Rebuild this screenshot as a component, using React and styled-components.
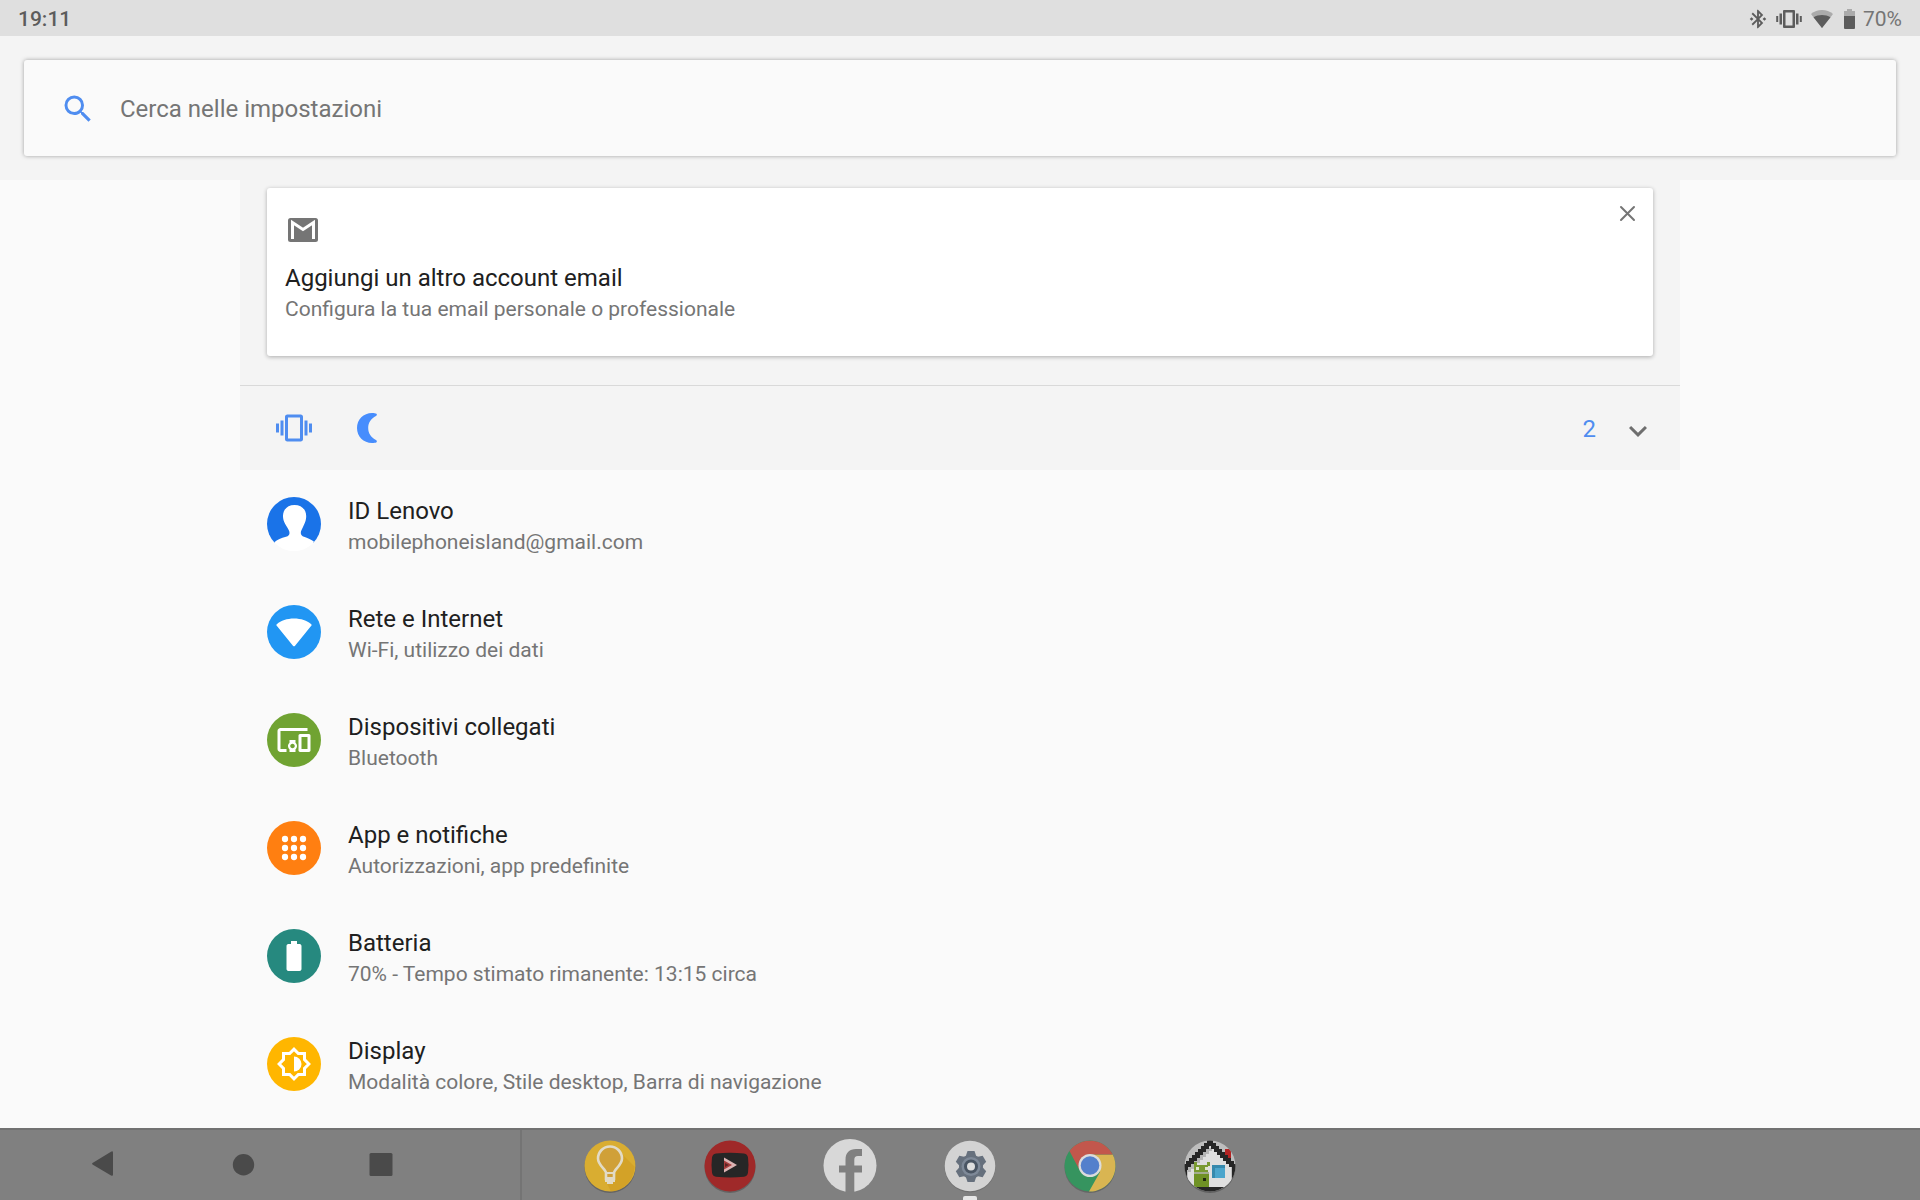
import React from 'react';
import styled, { createGlobalStyle } from 'styled-components';
import {
  MdSearch,
  MdVibration,
  MdDevicesOther,
  MdBatteryFull,
  MdExpandMore,
  MdBluetoothConnected,
} from 'react-icons/md';

const theme = {
  page: '#fafafa',
  band: '#f4f4f4',
  statusBar: '#dfdfdf',
  blue: '#4f8df0',
  title: '#202020',
  grey: '#757575',
  nav: '#808080',
  navIcon: '#4a4a4a',
};

const GlobalStyle = createGlobalStyle`
  * {
    box-sizing: border-box;
  }
  body {
    margin: 0;
    background: ${theme.page};
    font-family: Roboto, "Liberation Sans", sans-serif;
  }
`

const Page = styled.div`
  display: flex;
  flex-direction: column;
  min-height: 100vh;
`

const StatusBar = styled.header`
  display: flex;
  align-items: center;
  justify-content: space-between;
  height: 36px;
  padding: 1px 18px 0;
  background: ${theme.statusBar};
  font-size: 21px;
  line-height: 24px;
  color: #5c5c5c;
`

const Clock = styled.time`
  font-weight: 500;
`

const StatusIcons = styled.div`
  display: flex;
  align-items: center;
  color: #757575;

  svg {
    display: block;
    color: #5c5c5c;
  }
`

const SearchBand = styled.div`
  padding: 24px;
  background: ${theme.band};
`

const SearchCard = styled.label`
  display: flex;
  align-items: center;
  gap: 24px;
  height: 96px;
  padding: 2px 36px 0;
  background: ${theme.page};
  border-radius: 3px;
  box-shadow: 0 0 4px rgba(0, 0, 0, 0.35);
  color: ${theme.blue};
`

const SearchInput = styled.input`
  flex: 1;
  border: none;
  outline: none;
  padding: 0;
  background: transparent;
  font-family: inherit;
  font-size: 24px;
  line-height: 32px;
  color: ${theme.title};
  &::placeholder {
    color: ${theme.grey};
    opacity: 1;
  }
`

const Content = styled.main`
  flex: 1;
  width: 75%;
  margin: 0 auto;
`

const Suggestions = styled.section`
  padding: 8px 27px 29px;
  background: ${theme.band};
`

const SuggestionCard = styled.article`
  padding: 14px 13px 32px 18px;
  background: white;
  border-radius: 3px;
  box-shadow: 0 1px 4px rgba(0, 0, 0, 0.3);
`

const CardHeader = styled.div`
  display: flex;
  align-items: flex-start;
  justify-content: space-between;
  margin-bottom: 14px;
`

const CardIcon = styled.svg`
  display: block;
  margin-top: 10px;
`

const IconButton = styled.button`
  display: block;
  border: none;
  padding: 0;
  background: transparent;
  cursor: pointer;

  svg {
    display: block;
  }
`

const Title = styled.h2`
  margin: 0;
  font-size: 24px;
  font-weight: 400;
  line-height: 32px;
  color: ${theme.title};
`

const Summary = styled.p`
  margin: 0;
  font-size: 21px;
  line-height: 30px;
  color: ${theme.grey};
`

const Conditions = styled.section`
  display: flex;
  align-items: center;
  justify-content: space-between;
  height: 85px;
  padding: 0 24px 0 36px;
  background: ${theme.band};
  border-top: 1px solid #d9d9d9;
`

const ConditionGroup = styled.div`
  display: flex;
  align-items: center;
  gap: ${props => props.$gap};
  color: ${theme.blue};
`

const ConditionCount = styled.span`
  padding-top: 2px;
  font-size: 24px;
  line-height: 32px;
`

const SettingsList = styled.ul`
  list-style: none;
  margin: 0;
  padding: 0 0 10px;
`

const SettingsRow = styled.a`
  display: flex;
  align-items: center;
  gap: 27px;
  height: 108px;
  padding: 0 27px;
  text-decoration: none;
`

const RoundIcon = styled.span`
  display: flex;
  align-items: center;
  justify-content: center;
  width: 54px;
  height: 54px;
  border-radius: 50%;
  overflow: hidden;
  color: white;
  background: ${props => props.$color};
`

const RowText = styled.div`
  padding-top: 4px;
`

const NavBar = styled.nav`
  display: flex;
  height: 72px;
  background: ${theme.nav};
  border-top: 2px solid #717171;
`

const SystemButtons = styled.div`
  display: flex;
  align-items: center;
  padding: 0 70px 0 36px;
  border-right: 2px solid #747474;
`

const SystemButton = styled(IconButton)`
  display: flex;
  justify-content: center;
  width: 138px;
`

const Dock = styled.div`
  display: flex;
  padding-left: 28px;
`

const DockApp = styled(IconButton)`
  display: flex;
  flex-direction: column;
  align-items: center;
  justify-content: space-between;
  width: 120px;
  padding-top: 9px;
`

const ActiveMark = styled.span`
  width: 14px;
  height: 4px;
  border-radius: 2px 2px 0 0;
  background: #e6e6e6;
`

const PersonIcon = () => (
  <svg width="54" height="54" viewBox="0 0 54 54" fill="currentColor">
    <path d="M27.500 8C20.500 8 16 12.500 16 19c0 5 2 7.500 4 11 1.500 2.600 2.500 4 2.500 6 0 2-1 3-3.500 3.800C14 41.200 10.500 42.500 7 45.500V54h41v-8.500c-3.500-3-7.500-4.300-11-5.700-2-.8-3.200-1.800-3.200-3.800 0-2 1-3.400 2.200-6 1.500-3.500 3.200-6 3.200-11C39.200 12.500 34.500 8 27.500 8z" />
  </svg>
)

const WifiIcon = () => (
  <svg width="36" height="36" viewBox="0 0 24 24" fill="currentColor">
    <path d="M11.300 21.100 .5 7.900Q-.1 7.100.7 6.600C3.200 4.400 7.400 3 12 3s8.800 1.400 11.300 3.600q.8.500.2 1.300L12.700 21.100q-.7.800-1.400 0z" />
  </svg>
)

const AppsIcon = () => (
  <svg width="36" height="36" viewBox="0 0 24 24" fill="currentColor">
    {[6, 12, 18].map(y => [6, 12, 18].map(x => (
      <circle key={`${x}-${y}`} cx={x} cy={y} r="2.100" />
    )))}
  </svg>
)

const BrightnessIcon = () => (
  <svg width="36" height="36" viewBox="0 0 24 24" fill="none">
    <path d="M19 5v4.100L21.900 12 19 14.900V19h-4.100L12 21.900 9.100 19H5v-4.100L2.100 12 5 9.100V5h4.100L12 2.100 14.900 5z" stroke="currentColor" strokeWidth="2" />
    <path d="M12 7a5 5 0 0 1 0 10z" fill="currentColor" />
  </svg>
)

const MoonIcon = () => (
  <svg width="36" height="36" viewBox="0 0 36 36">
    <path d="M24 3C15.500 3 9 9.600 9 18s6.500 15 15 15c2 0 3.600-.2 4.500-.8.700-.7.300-1.700-.5-2.200-5-2.600-7.800-6.800-7.800-12S23 8.600 28 6c.8-.5 1.200-1.500.5-2.200C27.600 3.200 26 3 24 3z" fill="#478dfd" />
  </svg>
)

const KeepLogo = () => (
  <svg width="54" height="54" viewBox="0 0 54 54">
    <circle cx="27" cy="28.500" r="25.500" fill="#000" opacity=".22" />
    <circle cx="27" cy="27" r="25.500" fill="#d9ad31" />
    <path d="M37 13l14.500 14.500C51 41 41 52 28 52.500l-4-8 8-6z" fill="#cf9b22" opacity=".6" />
    <path d="M23 34c0-4-8-7.500-8-14.500a12 12 0 0 1 24 0c0 7-8 10.500-8 14.500v6h-8z" fill="#d0a038" stroke="#e2dbc6" strokeWidth="2.600" />
    <path d="M22 34h10M22 39h10" stroke="#e2dbc6" strokeWidth="2.200" />
    <path d="M22 40h10v3h-2v2h-6v-2h-2z" fill="#e2dbc6" />
  </svg>
)

const VideoLogo = () => (
  <svg width="54" height="54" viewBox="0 0 54 54">
    <circle cx="27" cy="28.500" r="25.500" fill="#000" opacity=".22" />
    <circle cx="27" cy="27" r="25.500" fill="#9f2929" />
    <path d="M13 14.500q14-1.500 28 0 3.500.5 4 4 1 7.500 0 15-.5 3.800-4 4.300-14 1.500-28 0-3.500-.5-4-4.300-1-7.500 0-15 .5-3.500 4-4z" fill="#262626" />
    <path d="M21 18.500L34 26l-13 7.500z" fill="#dcb3b3" />
    <path d="M21 21.500L29 26l-8 4.500z" fill="#a83c3c" />
    <path d="M22 24l4 2-4 2z" fill="#5d2424" />
  </svg>
)

const FacebookLogo = () => (
  <svg width="54" height="54" viewBox="0 0 54 54">
    <circle cx="27" cy="26.500" r="26.500" fill="#d8d8d8" />
    <path d="M22.500 54V33.500H16v-7h6.500V21c0-7.500 4-11 10.500-11H39v7h-4c-2.700 0-3.700 1.500-3.700 4v5.500H39v7h-7.700V54z" fill={theme.nav} />
  </svg>
)

const SettingsLogo = () => (
  <svg width="54" height="54" viewBox="0 0 54 54">
    <circle cx="27" cy="28" r="25.500" fill="#000" opacity=".12" />
    <circle cx="27" cy="27" r="25.300" fill="#d3d3d3" />
    <g fill="#66707d" transform="translate(28 27.500)">
      {[0, 60, 120].map(angle => (
        <path key={angle} d="M-5-11l1.500-4.500h7L5-11V11L3.500 15.500h-7L-5 11z" transform={`rotate(${angle})`} />
      ))}
      <circle r="12" />
    </g>
    <circle cx="28" cy="27.500" r="9.500" fill="#7e8998" />
    <circle cx="28" cy="27.500" r="5.500" fill="#dedede" stroke="#4a5563" strokeWidth="3" />
  </svg>
)

const ChromeLogo = () => (
  <svg width="54" height="54" viewBox="0 0 54 54">
    <circle cx="27" cy="28.500" r="25.500" fill="#000" opacity=".2" />
    <circle cx="27" cy="27" r="25.500" fill="#36945f" />
    <path d="M27 15.500H49.700A25.500 25.500 0 0 1 26 52.500L37 33z" fill="#d9b552" />
    <path d="M6.500 12A25.500 25.500 0 0 1 49.700 15.500H27A11.500 11.500 0 0 0 16.500 31z" fill="#c2574c" />
    <circle cx="27" cy="26.500" r="11.500" fill="#dcdcdc" />
    <circle cx="27" cy="26.500" r="9.300" fill="#5480cc" />
  </svg>
)

const HouseLogo = () => (
  <svg width="54" height="54" viewBox="0 0 54 54">
    <defs>
      <clipPath id="houseClip"><circle cx="27" cy="27" r="25.500" /></clipPath>
    </defs>
    <circle cx="27" cy="28.500" r="25.500" fill="#000" opacity=".25" />
    <g clipPath="url(#houseClip)" shapeRendering="crispEdges">
      <rect width="54" height="54" fill="#bdbdbd" />
      <path d="M42 10h6v11h-6z" fill="#b32323" />
      <path d="M27 7L5 29v21h43V28z" fill="#dfdfdf" />
      <path d="M25 9h4v3h-3v3h-3v3h-3v3h-3v3h-3v3h-3v3H8v3H5v-6z" fill="#b5b5b5" />
      <path d="M24 1h6v3h3v3h3v3h3v3h3v3h3v3h3v3h3v3h3v29h-5V28h-3v-3h-3v-3h-3v-3h-3v-3h-3v-3h-3v-3h-3V7h-2v3h-3v3h-3v3h-3v3h-3v3h-3v3H8v3H5v3H4v20H0V25h3v-3h3v-3h3v-3h3v-3h3v-3h3V7h3V4h3z" fill="#262626" />
      <path d="M4 48h46v6H4z" fill="#262626" />
      <path d="M11 23h3v3h10v-3h3v4h-2v6H11z" fill="#799a31" />
      <path d="M13 28h3v3h-3zM22 28h3v3h-3z" fill="#dfe5cd" />
      <path d="M11 35h15v13H11z" fill="#6f9225" />
      <path d="M11 33h15v2H11z" fill="#a4ad91" />
      <path d="M20 39h3v3h-3z" fill="#20280f" />
      <path d="M29 26h13v13H29z" fill="#3689ad" />
      <path d="M32 29h10v10H32z" fill="#4ba5cc" />
    </g>
  </svg>
)

const settings = [
  { title: 'ID Lenovo', summary: 'mobilephoneisland@gmail.com', color: 'linear-gradient(#1a73e8 85%, white 85%)', icon: <PersonIcon /> },
  { title: 'Rete e Internet', summary: 'Wi-Fi, utilizzo dei dati', color: '#2196f3', icon: <WifiIcon /> },
  { title: 'Dispositivi collegati', summary: 'Bluetooth', color: '#70a332', icon: <MdDevicesOther size={36} /> },
  { title: 'App e notifiche', summary: 'Autorizzazioni, app predefinite', color: '#ff7f11', icon: <AppsIcon /> },
  { title: 'Batteria', summary: '70% - Tempo stimato rimanente: 13:15 circa', color: '#26897f', icon: <MdBatteryFull size={36} /> },
  { title: 'Display', summary: 'Modalità colore, Stile desktop, Barra di navigazione', color: '#ffb600', icon: <BrightnessIcon /> },
]

const dockApps = [
  { name: 'Keep', logo: <KeepLogo /> },
  { name: 'Video', logo: <VideoLogo /> },
  { name: 'Facebook', logo: <FacebookLogo /> },
  { name: 'Impostazioni', logo: <SettingsLogo />, active: true },
  { name: 'Chrome', logo: <ChromeLogo /> },
  { name: 'Casa', logo: <HouseLogo /> },
]

const App = () => {
  return (
    <Page>
      <GlobalStyle />

      <StatusBar>
        <Clock>19:11</Clock>
        <StatusIcons>
          <MdBluetoothConnected size={22} />
          <svg width="41" height="24" viewBox="2 0 41 24" fill="currentColor">
            <path d="M17 3h10q1 0 1 1v16q0 1-1 1H17q-1 0-1-1V4q0-1 1-1zm1.500 2.500v13h7v-13zM12.500 6.500H15v11h-2.500zM29 6.500h2.500v11H29zM9.200 9h2v6h-2zM32.800 9h2v6h-2z" fillRule="evenodd" />
          </svg>
          <svg width="24" height="24" viewBox="0 0 24 24" fill="currentColor">
            <path d="M12 21L1 7C4 4.500 8 3 12 3s8 1.500 11 4z" opacity=".4" />
            <path d="M12 21L3.500 10.200C6 8.700 9 8 12 8s6 .7 8.500 2.200z" />
          </svg>
          <svg width="29" height="24" viewBox="0 0 29 24" fill="currentColor">
            <path d="M10 4h3V2h5v2h3v5H10z" opacity=".4" />
            <path d="M10 9h11v12q0 1-1 1h-9q-1 0-1-1z" />
          </svg>
          70%
        </StatusIcons>
      </StatusBar>

      <SearchBand>
        <SearchCard>
          <MdSearch size={36} />
          <SearchInput type="text" aria-label="Cerca nelle impostazioni" placeholder="Cerca nelle impostazioni" />
        </SearchCard>
      </SearchBand>

      <Content>
        <Suggestions>
          <SuggestionCard>
            <CardHeader>
              <CardIcon width="36" height="36" viewBox="0 0 36 36">
                <rect x="3" y="6" width="30" height="24" rx="2.500" fill="#757575" />
                <path d="M7.500 27V10.500L18 17.500 28.500 10.500V27" fill="none" stroke="white" strokeWidth="3" />
              </CardIcon>
              <IconButton aria-label="Chiudi">
                <svg width="24" height="24" viewBox="0 0 24 24" stroke="#757575" strokeWidth="2" strokeLinecap="round">
                  <path d="M5 5l13 13M18 5L5 18" />
                </svg>
              </IconButton>
            </CardHeader>
            <Title>Aggiungi un altro account email</Title>
            <Summary>Configura la tua email personale o professionale</Summary>
          </SuggestionCard>
        </Suggestions>

        <Conditions>
          <ConditionGroup $gap="36px">
            <MdVibration size={36} />
            <MoonIcon />
          </ConditionGroup>
          <ConditionGroup $gap="24px">
            <ConditionCount>2</ConditionCount>
            <IconButton aria-label="Espandi">
              <MdExpandMore size={36} viewBox="0 -2 24 24" color="#6e6e6e" />
            </IconButton>
          </ConditionGroup>
        </Conditions>

        <SettingsList>
          {settings.map(item => (
            <li key={item.title}>
              <SettingsRow href="#">
                <RoundIcon $color={item.color}>{item.icon}</RoundIcon>
                <RowText>
                  <Title>{item.title}</Title>
                  <Summary>{item.summary}</Summary>
                </RowText>
              </SettingsRow>
            </li>
          ))}
        </SettingsList>
      </Content>

      <NavBar>
        <SystemButtons>
          <SystemButton aria-label="Indietro">
            <svg width="30" height="30" viewBox="0 0 30 30" fill={theme.navIcon}>
              <path d="M2.500 14.500q-1-.8 0-1.600L21 1.700q2-1 2 1V24.500q0 2-2 1z" />
            </svg>
          </SystemButton>
          <SystemButton aria-label="Home">
            <svg width="30" height="30" viewBox="0 0 30 30" fill={theme.navIcon}>
              <circle cx="15.500" cy="14.700" r="10.700" />
            </svg>
          </SystemButton>
          <SystemButton aria-label="Recenti">
            <svg width="30" height="30" viewBox="0 0 30 30" fill={theme.navIcon}>
              <rect x="3.500" y="3" width="23" height="23" rx="1.500" />
            </svg>
          </SystemButton>
        </SystemButtons>
        <Dock>
          {dockApps.map(app => (
            <DockApp key={app.name} aria-label={app.name}>
              {app.logo}
              {app.active && <ActiveMark />}
            </DockApp>
          ))}
        </Dock>
      </NavBar>
    </Page>
  );
}

export default App;
